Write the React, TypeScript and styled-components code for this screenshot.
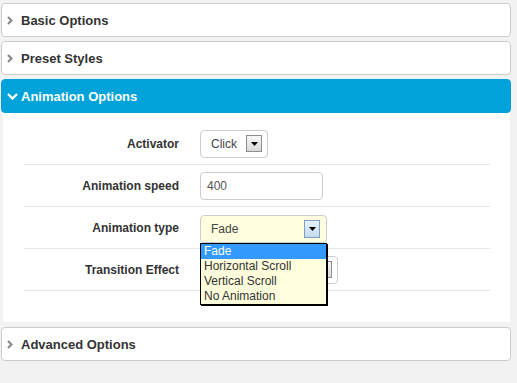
import React from 'react'
import styled, { createGlobalStyle } from 'styled-components'

const GlobalStyle = createGlobalStyle`
  html, body {
    margin: 0;
    padding: 0;
    background: #f2f2f2;
    font-family: "Liberation Sans", Arial, sans-serif;
  }
`

const RightChevron = () => (
  <svg width="6" height="9" viewBox="0 0 6 9">
    <path d="M1 1 L4.5 4.5 L1 8" fill="none" stroke="#8a8a8a" strokeWidth="2.2" />
  </svg>
)

const DownChevron = () => (
  <svg width="11" height="7" viewBox="0 0 11 7">
    <path d="M1 1 L5.5 5.5 L10 1" fill="none" stroke="#ffffff" strokeWidth="2.4" />
  </svg>
)

const ArrowButton = ({ focused }: { focused?: boolean }) => (
  <ArrowBox $focused={focused}>
    <svg width="7" height="4" viewBox="0 0 7 4">
      <path d="M0 0 H7 L3.5 4 Z" fill="#000" />
    </svg>
  </ArrowBox>
)

const PanelHeader = ({ title, open }: { title: string; open?: boolean }) => (
  <Header $open={open}>
    <IconSlot>{open ? <DownChevron /> : <RightChevron />}</IconSlot>
    {title}
  </Header>
)

const animationTypes = ['Fade', 'Horizontal Scroll', 'Vertical Scroll', 'No Animation']

export default function App() {
  return (
    <Page>
      <GlobalStyle />
      <PanelHeader title="Basic Options" />
      <PanelHeader title="Preset Styles" />
      <PanelHeader title="Animation Options" open />
      <Body>
        <Row>
          <Label>Activator</Label>
          <SelectBox $width={68}>
            <span>Click</span>
            <ArrowButton />
          </SelectBox>
        </Row>
        <Row>
          <Label>Animation speed</Label>
          <TextInput>400</TextInput>
        </Row>
        <Row>
          <Label>Animation type</Label>
          <SelectWrap>
            <SelectBox $width={127} $focused>
              <span>Fade</span>
              <ArrowButton focused />
            </SelectBox>
            <OptionList>
              {animationTypes.map((t, i) => (
                <Option key={t} $selected={i === 0}>
                  {t}
                </Option>
              ))}
            </OptionList>
          </SelectWrap>
        </Row>
        <Row>
          <Label>Transition Effect</Label>
          <SelectBox $width={138}>
            <span />
            <ArrowButton />
          </SelectBox>
        </Row>
      </Body>
      <PanelHeader title="Advanced Options" />
    </Page>
  )
}

const Page = styled.div`
  width: 510px;
  padding: 3px 0 0 1px;
  display: flex;
  flex-direction: column;
`

const Header = styled.div<{ $open?: boolean }>`
  box-sizing: border-box;
  height: 34px;
  margin-bottom: ${(p) => (p.$open ? '0' : '4px')};
  display: flex;
  align-items: center;
  padding-left: 5px;
  border: 1px solid ${(p) => (p.$open ? '#00a3d9' : '#cccccc')};
  border-radius: 4px;
  background: ${(p) => (p.$open ? '#00a3d9' : '#ffffff')};
  color: ${(p) => (p.$open ? '#ffffff' : '#333333')};
  font-size: 13px;
  font-weight: bold;
`

const IconSlot = styled.span`
  width: 14px;
  display: flex;
  align-items: center;
`

const Body = styled.div`
  margin: 0 1px 5px 2px;
  padding: 10px 20px 31px 21px;
  background: #ffffff;
`

const Row = styled.div`
  height: 41px;
  display: grid;
  grid-template-columns: 155px auto;
  column-gap: 21px;
  align-items: center;
  border-bottom: 1px solid #e6e6e6;
`

const Label = styled.div`
  text-align: right;
  font-size: 12px;
  font-weight: bold;
  color: #333333;
`

const SelectWrap = styled.div`
  position: relative;
  z-index: 2;
  top: 1px;
`

const SelectBox = styled.div<{ $width: number; $focused?: boolean }>`
  box-sizing: border-box;
  width: ${(p) => p.$width}px;
  height: 28px;
  display: flex;
  align-items: center;
  justify-content: space-between;
  padding: 0 ${(p) => (p.$focused ? 6 : 5)}px 0 10px;
  border: 1px solid #cccccc;
  border-radius: 4px;
  background: ${(p) => (p.$focused ? '#fefede' : '#ffffff')};
  color: #444444;
  font-size: 12px;
  overflow: hidden;
`

const ArrowBox = styled.span<{ $focused?: boolean }>`
  box-sizing: border-box;
  width: 16px;
  height: ${(p) => (p.$focused ? 18 : 17)}px;
  display: flex;
  align-items: center;
  justify-content: center;
  border: 1px solid ${(p) => (p.$focused ? '#7e9fc6' : '#8c8c8c')};
  background: ${(p) =>
    p.$focused
      ? 'linear-gradient(#e6f1fb, #c3dbf1)'
      : 'linear-gradient(#f7f7f7, #d9d9d9)'};
`

const TextInput = styled.div`
  box-sizing: border-box;
  width: 123px;
  height: 28px;
  display: flex;
  align-items: center;
  padding-left: 6px;
  border: 1px solid #cccccc;
  border-radius: 4px;
  background: #ffffff;
  color: #555555;
  font-size: 12px;
`

const OptionList = styled.div`
  position: absolute;
  top: 100%;
  left: 0;
  box-sizing: border-box;
  width: 127px;
  border: 1px solid #000000;
  box-shadow: 1px 1px 0 #000000;
  background: #fffedc;
`

const Option = styled.div<{ $selected?: boolean }>`
  height: 15px;
  line-height: 15px;
  padding-left: 3px;
  font-size: 12px;
  color: ${(p) => (p.$selected ? '#ffffff' : '#333333')};
  background: ${(p) => (p.$selected ? '#3399ff' : 'transparent')};
`
